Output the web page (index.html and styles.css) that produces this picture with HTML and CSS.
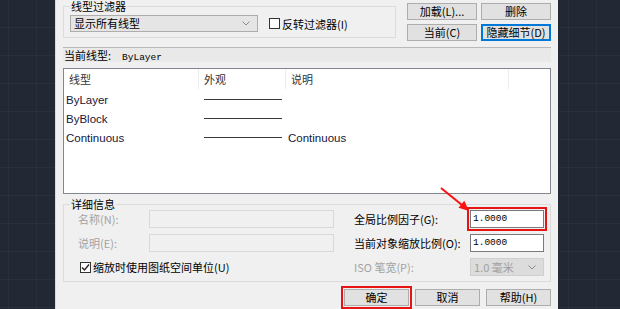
FILE: index.html
```html
<!DOCTYPE html>
<html lang="zh-CN">
<head>
  <meta charset="UTF-8" />
  <title>线型管理器</title>
  <link rel="stylesheet" href="styles.css">
</head>
<body>
  <div class="dialog">
    <div class="top">
      <fieldset class="group filter">
        <legend>线型过滤器</legend>
        <div class="filter-row">
          <div class="select">
            <span>显示所有线型</span>
            <svg class="chev" width="8" height="5" viewBox="0 0 8 5"><path d="M0.5 0.5 L4 4 L7.5 0.5" /></svg>
          </div>
          <label class="check"><span class="box"></span>反转过滤器(I)</label>
        </div>
      </fieldset>
      <div class="top-buttons">
        <button>加载(L)...</button>
        <button>删除</button>
        <button>当前(C)</button>
        <button class="focus">隐藏细节(D)</button>
      </div>
    </div>

    <div class="current">当前线型:<span class="mono">ByLayer</span></div>

    <div class="list">
      <div class="list-row list-head">
        <div class="cell">线型</div>
        <div class="cell">外观</div>
        <div class="cell">说明</div>
        <div class="cell last"></div>
      </div>
      <div class="list-row">
        <div class="name">ByLayer</div>
        <div class="look"><span class="sample"></span></div>
        <div class="desc"></div>
      </div>
      <div class="list-row">
        <div class="name">ByBlock</div>
        <div class="look"><span class="sample"></span></div>
        <div class="desc"></div>
      </div>
      <div class="list-row">
        <div class="name">Continuous</div>
        <div class="look"><span class="sample"></span></div>
        <div class="desc">Continuous</div>
      </div>
    </div>

    <fieldset class="group details">
      <legend>详细信息</legend>
      <div class="details-grid">
        <div class="lbl off">名称(N):</div>
        <div class="field off"></div>
        <div class="lbl right">全局比例因子(G):</div>
        <div class="field value mark">1.0000</div>

        <div class="lbl off">说明(E):</div>
        <div class="field off"></div>
        <div class="lbl right">当前对象缩放比例(O):</div>
        <div class="field value">1.0000</div>

        <label class="check wide">
          <span class="box">
            <svg width="9" height="9" viewBox="0 0 9 9"><path d="M1 4.5 L3.5 7 L8 1.5" /></svg>
          </span>缩放时使用图纸空间单位(U)
        </label>
        <div class="lbl right off">ISO 笔宽(P):</div>
        <div class="field combo off">
          <span>1.0 毫米</span>
          <svg class="chev" width="8" height="5" viewBox="0 0 8 5"><path d="M0.5 0.5 L4 4 L7.5 0.5" /></svg>
        </div>
      </div>
    </fieldset>

    <div class="actions">
      <button class="mark">确定</button>
      <button>取消</button>
      <button>帮助(H)</button>
    </div>
  </div>

  <svg class="arrow" width="620" height="309" viewBox="0 0 620 309">
    <line x1="441" y1="188" x2="462" y2="205" />
    <polygon points="469,211 458.5,207.8 464.3,200.8" />
  </svg>
</body>
</html>
```

FILE: styles.css
```css
body {
  margin: 0;
  width: 620px;
  height: 309px;
  overflow: hidden;
  position: relative;
  background-color: #222834;
  background-image:
    linear-gradient(rgba(255, 255, 255, 0.035) 1px, transparent 1px),
    linear-gradient(90deg, rgba(255, 255, 255, 0.035) 1px, transparent 1px);
  background-size: 28px 28px;
  background-position: 8px 27px;
  font-family: "Noto Sans CJK SC", sans-serif;
  font-size: 11px;
  color: #000;
}

.dialog {
  margin-left: 55px;
  width: 503px;
  height: 309px;
  box-sizing: border-box;
  padding: 0 7px;
  background: #f0f0f0;
  border-left: 1px solid #dadada;
}

.group {
  margin: 0;
  padding: 3px 6px 5px;
  border: 1px solid #dcdcdc;
  min-width: 0;
}

.group legend {
  padding: 0 1px;
  line-height: 12px;
  font-size: 11px;
}

/* top area */
.top {
  display: flex;
  align-items: flex-start;
  justify-content: space-between;
}

.filter {
  width: 333px;
  box-sizing: border-box;
}

.filter-row {
  display: flex;
  align-items: center;
}

.select {
  width: 188px;
  height: 17px;
  box-sizing: border-box;
  border: 1px solid #adadad;
  background: #e5e5e5;
  display: flex;
  align-items: center;
  justify-content: space-between;
  padding: 0 7px 0 3px;
  line-height: 15px;
}

.chev path {
  fill: none;
  stroke: #8a8a8a;
  stroke-width: 1;
}

.check {
  display: flex;
  align-items: center;
  line-height: 14px;
  margin-left: 11px;
}

.box {
  width: 11px;
  height: 11px;
  box-sizing: border-box;
  border: 1px solid #333;
  background: #fff;
  margin-right: 2px;
  display: flex;
  align-items: center;
  justify-content: center;
}

.box path {
  fill: none;
  stroke: #222;
  stroke-width: 1.4;
}

.top-buttons {
  margin-top: 3px;
  display: grid;
  grid-template-columns: 70px 70px;
  column-gap: 4px;
  row-gap: 4px;
}

button {
  height: 17px;
  padding: 0;
  margin: 0;
  border: 1px solid #adadad;
  background: #e1e1e1;
  font-family: "Noto Sans CJK SC", sans-serif;
  font-size: 11px;
  line-height: 15px;
  color: #000;
}

button.focus {
  border-color: #0078d7;
  box-shadow: inset 0 0 0 1px #0078d7;
}

/* current linetype */
.current {
  margin-top: 6px;
  height: 15px;
  box-sizing: border-box;
  border-top: 1px solid #b9b9b9;
  background: #e9e9e9;
  line-height: 14px;
  padding-left: 1px;
}

.mono {
  font-family: "Liberation Mono", monospace;
  font-size: 9.5px;
  margin-left: 11px;
}

/* list */
.list {
  margin-top: 6px;
  height: 126px;
  box-sizing: border-box;
  border: 1px solid #828790;
  background: #fff;
}

.list-row {
  display: grid;
  grid-template-columns: 135px 87px 223px 1fr;
  height: 19px;
  align-items: center;
}

.list-head {
  height: 20px;
  margin-bottom: 1px;
  color: #333;
}

.list-head .cell {
  height: 20px;
  line-height: 20px;
  padding-left: 5px;
  border-right: 1px solid #ececec;
}

.list-head .last {
  border-right: none;
}

.name,
.desc {
  font-family: "Liberation Sans", sans-serif;
  font-size: 11.5px;
  color: #16163a;
  padding-left: 2px;
}

.look {
  padding-left: 5px;
  display: flex;
  align-items: center;
}

.sample {
  display: block;
  width: 78px;
  height: 1.5px;
  background: #3a3a3a;
}

/* details */
.details {
  margin-top: 4px;
  padding-top: 0;
}

.details-grid {
  margin-left: 8px;
  display: grid;
  grid-template-columns: 71px 185px 20px 116px 74px;
  grid-template-rows: 18px 18px 18px;
  row-gap: 6px;
  align-items: center;
}

.lbl {
  line-height: 18px;
}

.lbl.right {
  grid-column: 4;
}

.off {
  color: #a3a3a3;
}

.field {
  height: 18px;
  box-sizing: border-box;
  border: 1px solid #7a7a7a;
  background: #fff;
}

.field.off {
  border-color: #d9d9d9;
  background: #f0f0f0;
}

.value {
  font-family: "Liberation Mono", monospace;
  font-size: 9.5px;
  line-height: 16px;
  padding-left: 2px;
}

.combo {
  display: flex;
  align-items: center;
  justify-content: space-between;
  padding: 0 7px 0 3px;
}

.field.combo.off {
  background: #dcdcdc;
  border-color: #cfcfcf;
  color: #a0a0a0;
}

.check.wide {
  grid-column: 1 / 3;
  margin-left: 2px;
  color: #000;
}

.mark {
  outline: 2px solid #e81414;
  outline-offset: 1px;
}

/* bottom buttons */
.actions {
  margin-top: 7px;
  display: flex;
  justify-content: flex-end;
  gap: 6px;
}

.actions button {
  width: 65px;
}

.arrow {
  position: absolute;
  left: 0;
  top: 0;
  pointer-events: none;
}

.arrow line {
  stroke: #ff1010;
  stroke-width: 2;
}

.arrow polygon {
  fill: #ff1010;
}
```
